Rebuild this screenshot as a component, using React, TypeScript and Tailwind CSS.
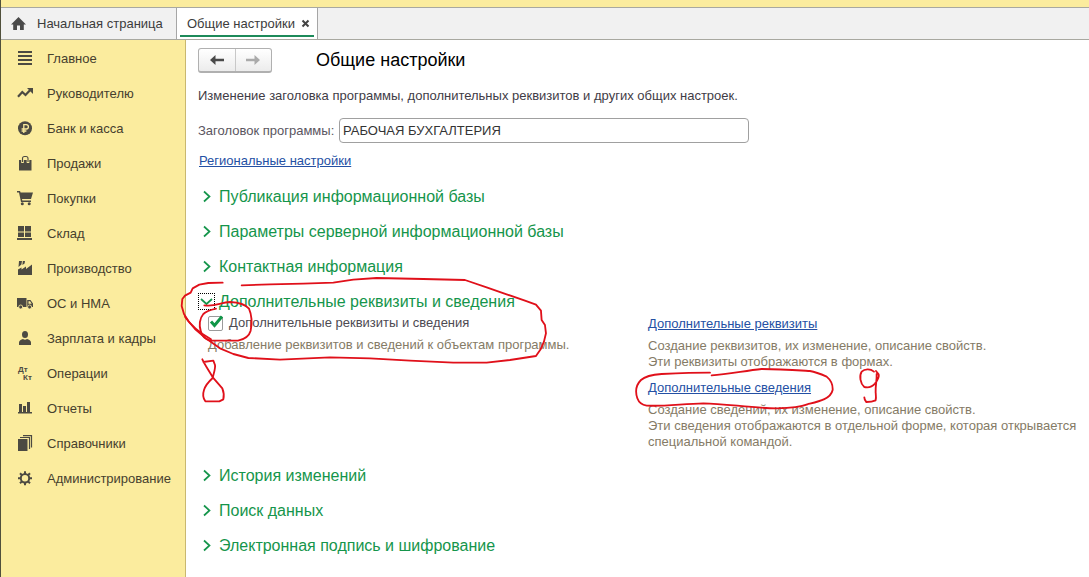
import { useState } from 'react';
import type { ReactNode } from 'react';
import { clsx } from 'clsx';

interface MenuItem {
  title: string;
  icon: ReactNode;
}

const menuItems: MenuItem[] = [
  {
    title: 'Главное',
    icon: <path d="M1 1h14v2H1zM1 5h14v2H1zM1 9h14v2H1zM1 13h14v2H1z" />,
  },
  {
    title: 'Руководителю',
    icon: (
      <>
        <path d="M1 11.8 5.3 7l3.2 3L13 5.2" fill="none" stroke="currentColor" strokeWidth="2.2" />
        <path d="M10 3h6v6z" />
      </>
    ),
  },
  {
    title: 'Банк и касса',
    icon: (
      <>
        <circle cx="8" cy="8.3" r="7" />
        <path
          d="M6.8 13V4.6h2.4a2.2 2.2 0 0 1 0 4.4H4.6M4.6 11h4.8"
          fill="none"
          stroke="#fbec9e"
          strokeWidth="1.3"
        />
      </>
    ),
  },
  {
    title: 'Продажи',
    icon: (
      <>
        <path d="M2 5h12.5v10.5H2z" />
        <path d="M5.5 8V3.5a2 2 0 0 1 2-2H9a2 2 0 0 1 2 2V8" fill="none" stroke="#fbec9e" strokeWidth="2.6" />
        <path d="M5.5 7V3.5a2 2 0 0 1 2-2H9a2 2 0 0 1 2 2V7" fill="none" stroke="currentColor" strokeWidth="1.1" />
      </>
    ),
  },
  {
    title: 'Покупки',
    icon: (
      <>
        <path d="M0 1h3l.6 1.5H16L14 9H5l.3 1.500h8.7V12H4L2 2.500H0z" />
        <circle cx="5.3" cy="13.8" r="1.5" />
        <circle cx="12.2" cy="13.8" r="1.5" />
      </>
    ),
  },
  {
    title: 'Склад',
    icon: <path d="M1 1h6v5.500H1zM8 1h6v5.500H8zM1 7.500h6V12H1zM8 7.500h6V12H8zM0 13h15v2H0z" />,
  },
  {
    title: 'Производство',
    icon: (
      <path d="M1 15V9.500L4.500 7.500v2L9 6.500V9l6-4.500V15zM2 1h3L4.400 4.500 1.500 7zM5.800 1H8l-.4 2.500L5.400 5z" />
    ),
  },
  {
    title: 'ОС и НМА',
    icon: (
      <>
        <path d="M0 3h9.500v9H0z" />
        <path d="M10.2 5h3.300L16 8.500V12h-5.800zM11.500 6.200v2.500h3.200L13 6.200z" fillRule="evenodd" />
        <circle cx="3.7" cy="12" r="2" stroke="#fbec9e" strokeWidth=".8" />
        <circle cx="12.6" cy="12" r="2" stroke="#fbec9e" strokeWidth=".8" />
      </>
    ),
  },
  {
    title: 'Зарплата и кадры',
    icon: (
      <>
        <ellipse cx="8" cy="4.5" rx="3" ry="3.5" />
        <path d="M2 15v-2.500C2 10.500 4 9.500 6 9c1.200 1 2.800 1 4 0 2 .5 4 1.500 4 3.500V15z" />
      </>
    ),
  },
  {
    title: 'Операции',
    icon: (
      <g fontSize="8" fontWeight="700">
        <text x="1" y="7">Дт</text>
        <text x="6" y="15">Кт</text>
      </g>
    ),
  },
  {
    title: 'Отчеты',
    icon: <path d="M2 4h3v8H2zM6 6h3v6H6zM10 2h3v10h-3zM1 12h14v1.500H1z" />,
  },
  {
    title: 'Справочники',
    icon: (
      <>
        <path d="M1 4h9.500v12H1z" />
        <path d="M3 2.500h9.500V14M6 .7h8.500v11.800" fill="none" stroke="currentColor" strokeWidth="1.2" />
      </>
    ),
  },
  {
    title: 'Администрирование',
    icon: (
      <>
        <circle cx="8" cy="8.3" r="4.2" fill="none" stroke="currentColor" strokeWidth="2" />
        <path
          d="M8 1.300v3M8 12.300v3M1 8.300h3M12 8.300h3M3 3.300l2.200 2.200M10.800 11.100l2.200 2.200M3 13.300l2.200-2.200M10.800 5.500 13 3.300"
          fill="none"
          stroke="currentColor"
          strokeWidth="2"
        />
      </>
    ),
  },
];

function TabBar() {
  return (
    <div className="flex h-[33px] border-y border-[#a8a8a0] bg-[#f1f1f1] text-[#3c3c3c]">
      <button className="flex w-[176px] items-center gap-[11px] border-r border-[#a6a6a6] pl-[10px]">
        <svg width="15" height="14" viewBox="0 0 15 14" fill="#4a4a4a">
          <path d="M7.500 0 15 7.500h-2.200V13H9V8.500H6V13H2.200V7.500H0z" />
        </svg>
        Начальная страница
      </button>
      <div className="flex w-[141px] flex-col border-r border-[#a6a6a6] bg-white px-[3px] pb-[2px]">
        <div className="flex flex-1 items-center justify-between border-b-2 border-[#1d8a5a] pt-1 pr-1 pl-[7px]">
          <button className="whitespace-nowrap">Общие настройки</button>
          <button aria-label="Закрыть">
            <svg width="9" height="9" viewBox="0 0 9 9" fill="none" stroke="#444" strokeWidth="2">
              <path d="m1.500 1.500 6 6m0-6-6 6" />
            </svg>
          </button>
        </div>
      </div>
    </div>
  );
}

function Sidebar() {
  return (
    <nav className="w-[185px] shrink-0 border-r border-[#c9b870] bg-[#fbec9e] pt-px">
      {menuItems.map((item) => (
        <a key={item.title} href="#" className="flex h-[35px] items-center gap-[13px] pl-4 text-[#46402e]">
          <svg width="17" height="17" viewBox="0 0 17 17" className="shrink-0 fill-current text-[#4c4a42]">
            {item.icon}
          </svg>
          {item.title}
        </a>
      ))}
    </nav>
  );
}

interface SectionProps {
  title: string;
  open?: boolean;
}

function SectionHeader({ title, open }: SectionProps) {
  return (
    <button aria-expanded={!!open} className="flex h-[35px] items-center gap-1 text-base text-[#15954b]">
      <span
        className={clsx(
          'flex h-[17px] w-[17px] items-center justify-center border border-dotted',
          open ? 'border-black' : 'border-transparent'
        )}
      >
        <svg width="13" height="13" viewBox="0 0 13 13" fill="none" stroke="currentColor" strokeWidth="1.7">
          <path d={open ? 'm1 4 5.500 5L12 4' : 'm4 1.500 5.500 5-5.500 5'} />
        </svg>
      </span>
      {title}
    </button>
  );
}

function NavButtons() {
  return (
    <div className="flex h-[25px] w-[74px] rounded-[3px] border border-b-2 border-[#b0b0b0] bg-linear-to-b from-white to-[#ececec]">
      <button aria-label="Назад" className="flex flex-1 items-center justify-center border-r border-[#c8c8c8] text-[#4a4a4a]">
        <svg width="14" height="10" viewBox="0 0 14 10" fill="currentColor">
          <path d="M0 5l5.500-5v3.800H14v2.400H5.500V10z" />
        </svg>
      </button>
      <button aria-label="Вперед" className="flex flex-1 items-center justify-center text-[#aaaaaa]">
        <svg width="14" height="10" viewBox="0 0 14 10" fill="currentColor">
          <path d="M14 5 8.500 0v3.800H0v2.400h8.500V10z" />
        </svg>
      </button>
    </div>
  );
}

function ExtraDetails() {
  const [enabled, setEnabled] = useState(true);

  return (
    <div className="grid grid-cols-[450px_minmax(0,1fr)] pb-2 leading-4 text-[#857b66]">
      <div className="pl-[10px]">
        <label className="-mt-1 flex h-4 items-center gap-[6px] text-[#4d4a52]">
          <span className="relative flex">
            <input
              type="checkbox"
              checked={enabled}
              onChange={(e) => setEnabled(e.target.checked)}
              className="h-[15px] w-[15px] appearance-none rounded-[2px] border border-[#9a9a9a] bg-white"
            />
            {enabled && (
              <svg
                width="15"
                height="15"
                viewBox="0 0 15 15"
                className="pointer-events-none absolute top-0 left-0 overflow-visible"
                fill="none"
                stroke="#109648"
                strokeWidth="3"
              >
                <path d="M3 5.500 6.500 9.500 14 .5" />
              </svg>
            )}
          </span>
          Дополнительные реквизиты и сведения
        </label>
        <p className="mt-[6px]">Добавление реквизитов и сведений к объектам программы.</p>
      </div>
      <div>
        <a href="#" className="-mt-[3px] block text-[#2450a4] underline">
          Дополнительные реквизиты
        </a>
        <p className="mt-[6px]">
          Создание реквизитов, их изменение, описание свойств.
          <br />
          Эти реквизиты отображаются в формах.
        </p>
        <a href="#" className="mt-[10px] block text-[#2450a4] underline">
          Дополнительные сведения
        </a>
        <p className="mt-[6px]">
          Создание сведений, их изменение, описание свойств.
          <br />
          Эти сведения отображаются в отдельной форме, которая открывается
          <br />
          специальной командой.
        </p>
      </div>
    </div>
  );
}

// Hand-drawn marks that lie over the page
function Marks() {
  return (
    <svg
      width="1089"
      height="577"
      viewBox="0 0 1089 577"
      className="pointer-events-none absolute top-0 -left-px"
      fill="none"
      stroke="#e0101a"
      strokeWidth="5.5"
      strokeLinecap="round"
      strokeLinejoin="round"
    >
      <g transform="translate(170 270) scale(.3333)">
        <path d="M158 38 115 39 88 44 68 55 62 68 45 77 37 87 35 108 42 132 55 153 75 177 105 203 150 235 190 252 235 264 330 269 480 262 600 265 720 272 850 278 950 278 1020 270 1098 258 1112 238 1122 215 1128 190 1125 165 1115 150 1113 122 1098 104 1065 92 1010 73 950 52 885 30 760 27 620 24 550 29 490 38 400 41 300 43 215 46" />
        <path d="M138 116c-18 4-31 9-38 16-12 14-13 35-8 50 3 16 12 26 30 30h82c18-4 33-12 38-30 5-26 2-50-5-66-12-14-34-19-57-20-27 1-49 16-77 10" />
        <path d="M45 140c20 30 50 52 78 68" />
        <path d="M97 268c8 18 21 35 32 55l28 32c5 12 5 24 3 33l-12 6h-42c-6-8-8-22-4-34 5-16 14-25 26-36 3-14 9-29 7-39l-5-13-30 4" />
      </g>
      <g transform="translate(620 300) scale(.3333)">
        <path d="M270 218c-50 0-100 2-145 4-28 2-50 7-62 18-15 15-17 37-11 55 5 14 14 20 28 22 60 2 110-6 170-7 70 1 140 14 220 15 42-1 70-3 92-12 32-8 70-15 76-43 1-17-6-30-18-40-18-8-32-14-50-17-50-3-95-6-145-6-50 5-100 16-150 19" />
        <path d="M762 215c-12-10-28-8-37 0-8 12-4 36 8 46 12 3 24-1 32-10 8-10 14-18 11-28l-8-10M770 222c1 18-4 36-3 55 1 10 2 17 0 24-9 4-20 5-28 5-4-4-6-8-6-14" />
      </g>
    </svg>
  );
}

export default function App() {
  const [caption, setCaption] = useState('РАБОЧАЯ БУХГАЛТЕРИЯ');

  return (
    <div className="relative flex min-h-screen flex-col border-l border-[#50503c] bg-white font-['Liberation_Sans',Arial,sans-serif] text-[13px]">
      <div className="h-[7px] bg-[#fbec9e]" />
      <TabBar />
      <div className="flex flex-1">
        <Sidebar />
        <main className="min-w-0 flex-1 pt-2 pl-3">
          <div className="flex items-center gap-11">
            <NavButtons />
            <h1 className="text-lg leading-[25px] text-black">Общие настройки</h1>
          </div>
          <p className="mt-[15px] leading-4 text-[#3f3c46]">
            Изменение заголовка программы, дополнительных реквизитов и других общих настроек.
          </p>
          <div className="mt-[14px] flex items-center text-[#5a5560]">
            <label htmlFor="caption" className="w-[141px] whitespace-nowrap">
              Заголовок программы:
            </label>
            <input
              id="caption"
              value={caption}
              onChange={(e) => setCaption(e.target.value)}
              className="h-[25px] w-[410px] rounded-[4px] border border-[#a0a0a0] bg-white px-[3px] text-[#333] outline-none"
            />
          </div>
          <a href="#" className="mt-[10px] block pl-px leading-4 text-[#2450a4] underline">
            Региональные настройки
          </a>
          <div className="mt-[10px]">
            <SectionHeader title="Публикация информационной базы" />
            <SectionHeader title="Параметры серверной информационной базы" />
            <SectionHeader title="Контактная информация" />
            <SectionHeader title="Дополнительные реквизиты и сведения" open />
            <ExtraDetails />
            <SectionHeader title="История изменений" />
            <SectionHeader title="Поиск данных" />
            <SectionHeader title="Электронная подпись и шифрование" />
          </div>
        </main>
      </div>
      <Marks />
    </div>
  );
}
